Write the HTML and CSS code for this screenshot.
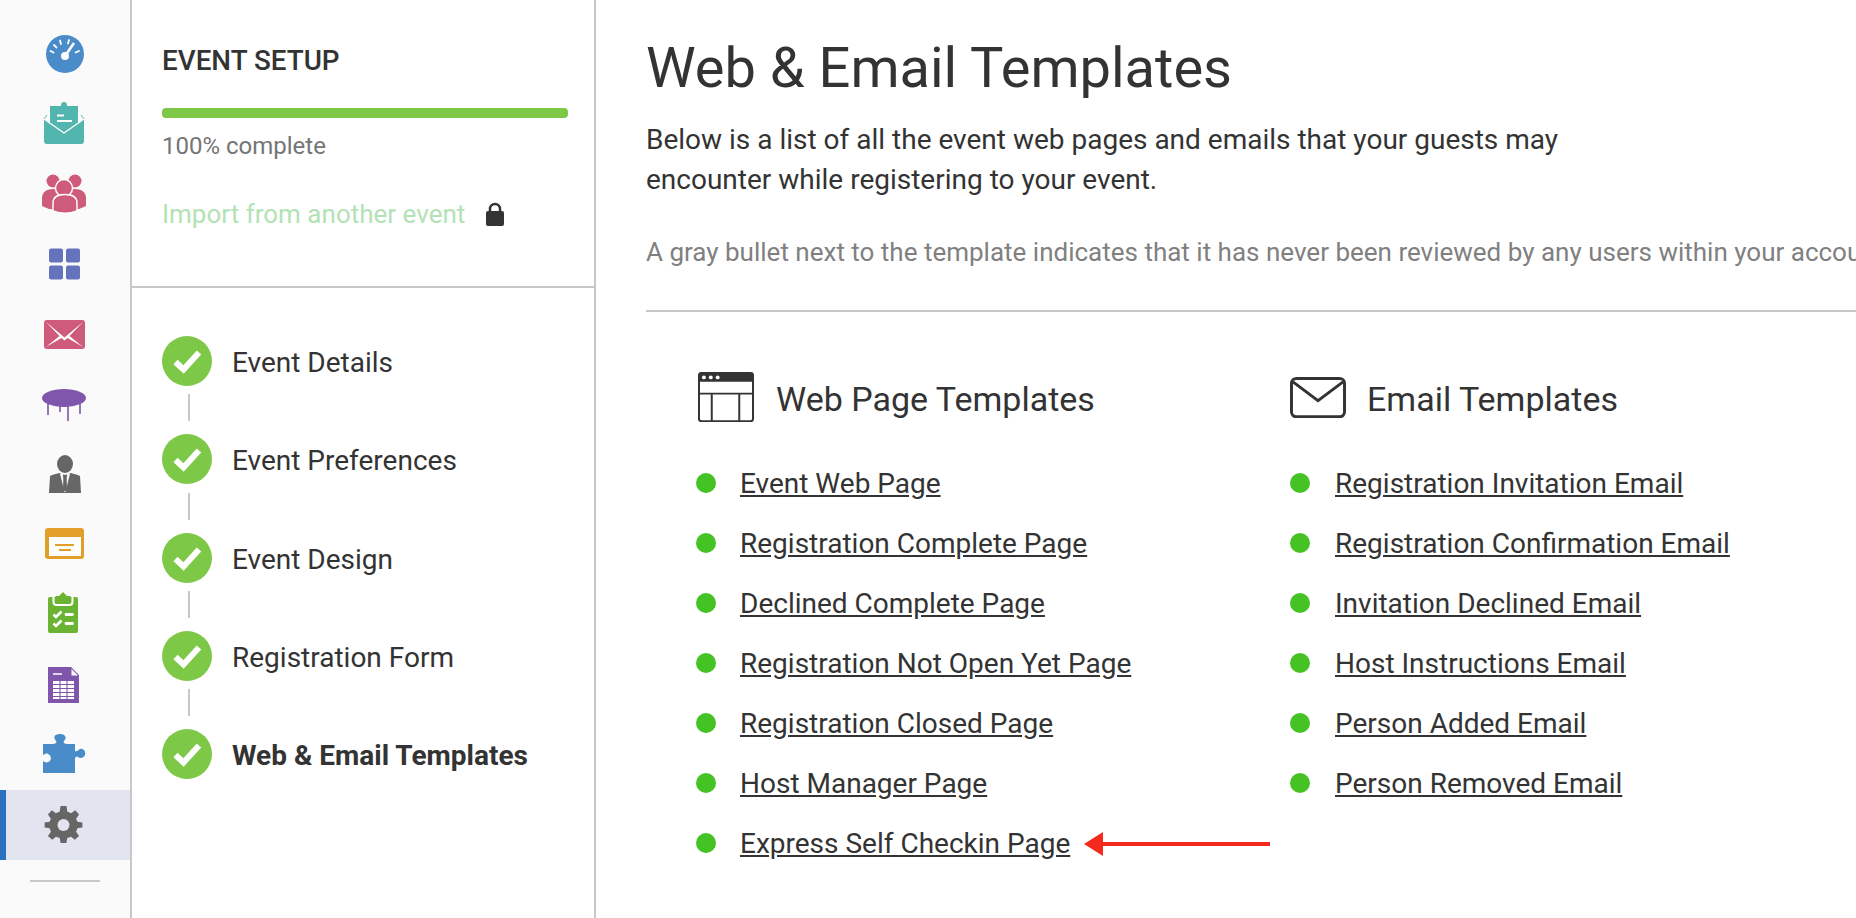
FILE: index.html
```html
<!DOCTYPE html>
<html lang="en">
<head>
    <meta charset="UTF-8">
    <title>Web &amp; Email Templates</title>
    <link rel="stylesheet" href="styles.css">
</head>
<body>
    <div class="app">
        <!-- Icon sidebar -->
        <nav class="sidebar">
            <div class="side-item">
                <svg viewBox="0 0 48 48" class="side-icon">
                    <circle cx="24" cy="24" r="19" fill="#4a8cca"/>
                    <circle cx="24" cy="26" r="4" fill="#fff"/>
                    <path d="M24 26 L33 13" stroke="#fff" stroke-width="2.6"/>
                    <path d="M9.5 21 L12.5 22.500 M13 15 L15.500 17.500 M19 10.500 L20 14 M28 10 L27 13.500 M38 21 L34.500 22.500" stroke="#fff" stroke-width="1.8" stroke-linecap="round"/>
                </svg>
            </div>
            <div class="side-item">
                <svg viewBox="0 0 48 48" class="side-icon">
                    <circle cx="23" cy="5" r="3" fill="#52b5ae"/>
                    <path d="M9 6 H37 V23 L23 33 L9 23 Z" fill="#52b5ae"/>
                    <path d="M6 15 L3 19 L5 21 M40 15 L43 19 L41 21" fill="none" stroke="#52b5ae" stroke-width="1"/>
                    <path d="M3 19 L23 33 L43 19 V41 A3 3 0 0 1 40 44 H6 A3 3 0 0 1 3 41 Z" fill="#52b5ae"/>
                    <path d="M3 19 L23 33 L43 19" fill="none" stroke="#fff" stroke-width="1.200"/>
                    <path d="M16 15.500 H23 M16 21 H31" stroke="#fff" stroke-width="1.800"/>
                </svg>
            </div>
            <div class="side-item">
                <svg viewBox="0 0 48 48" class="side-icon">
                    <g fill="#cf5b7c">
                        <circle cx="12" cy="11" r="6.500"/>
                        <circle cx="34" cy="11" r="6.500"/>
                        <path d="M1 36 V28 C1 22 6 19 12 19 C18 19 23 22 23 28 V40 L8 39 Z"/>
                        <path d="M45 36 V28 C45 22 40 19 34 19 C28 19 23 22 23 28 V40 L38 39 Z"/>
                    </g>
                    <circle cx="23" cy="18" r="8.500" fill="#cf5b7c" stroke="#fff" stroke-width="1.400"/>
                    <path d="M12 41 V33 C12 27 17 24.500 24 24.500 C31 24.500 36 27 36 33 V41 C28 44 20 44 12 41 Z" fill="#cf5b7c" stroke="#fff" stroke-width="1.400"/>
                </svg>
            </div>
            <div class="side-item">
                <svg viewBox="0 0 48 48" class="side-icon">
                    <g fill="#6573bd">
                        <rect x="8" y="8.500" width="14" height="14" rx="2"/>
                        <rect x="25" y="8.500" width="14" height="14" rx="2"/>
                        <rect x="8" y="25.500" width="14" height="14" rx="2"/>
                        <rect x="25" y="25.500" width="14" height="14" rx="2"/>
                    </g>
                </svg>
            </div>
            <div class="side-item">
                <svg viewBox="0 0 48 48" class="side-icon">
                    <rect x="3" y="10" width="41" height="29" rx="3" fill="#cf5b7c"/>
                    <path d="M5 12 L20 24.500 L23.500 27.500 L27 24.500 L42 12 L28.500 26 L42 37 L26.500 28 L23.500 30.500 L20.500 28 L5 37 L18.500 26 Z" fill="#fff"/>
                </svg>
            </div>
            <div class="side-item">
                <svg viewBox="0 0 48 48" class="side-icon">
                    <ellipse cx="23" cy="18" rx="22" ry="9" fill="#7f56ab"/>
                    <path d="M7 22 V35 M19 26 V32 M27 26 V41 M39 22 V34" stroke="#7f56ab" stroke-width="1.600"/>
                </svg>
            </div>
            <div class="side-item">
                <svg viewBox="0 0 48 48" class="side-icon">
                    <ellipse cx="24" cy="14" rx="8" ry="9" fill="#666"/>
                    <path d="M8 43 L9 26 C12 24.500 15 24 18 23 L24 25 L30 23 C33 24 36 24.500 39 26 L40 43 Z" fill="#666"/>
                    <path d="M19.500 24 L24 42 L21.500 24 Z M28.500 24 L24 42 L26.500 24 Z" fill="#fff" stroke="#fff" stroke-width="0.800"/>
                    <path d="M22.500 25 H25.500 L26 39 L24 42 L22 39 Z" fill="#666"/>
                </svg>
            </div>
            <div class="side-item">
                <svg viewBox="0 0 48 48" class="side-icon">
                    <rect x="4" y="8" width="39" height="31" rx="3" fill="#e29f27"/>
                    <rect x="8" y="17" width="32" height="19" fill="#fff"/>
                    <path d="M14 25 H33 M18 30 H30" stroke="#e29f27" stroke-width="1.800"/>
                </svg>
            </div>
            <div class="side-item">
                <svg viewBox="0 0 48 48" class="side-icon">
                    <rect x="7" y="7" width="30" height="36" rx="2" fill="#6bb332"/>
                    <path d="M12.500 7 V12 A3 3 0 0 0 15.500 15 H28.500 A3 3 0 0 0 31.500 12 V7" fill="#6bb332" stroke="#fff" stroke-width="2"/>
                    <path d="M14.500 6 H18 L22 2 L26 6 H29.500 V12 H14.500 Z" fill="#6bb332"/>
                    <path d="M12.500 24.500 L15 27 L20.500 21.500 M12.500 33.500 L15 36 L20.500 30.500" fill="none" stroke="#fff" stroke-width="2.600"/>
                    <path d="M25 24.500 H31.500 M25 33.500 H31.500" stroke="#fff" stroke-width="2.800" stroke-linecap="round"/>
                </svg>
            </div>
            <div class="side-item">
                <svg viewBox="0 0 48 48" class="side-icon">
                    <path d="M7 7 H30 L38 15 V43 H7 Z" fill="#7f56ab"/>
                    <path d="M30.500 9 L37 15.500 H30.500 Z" fill="#fff"/>
                    <path d="M12 14 H21" stroke="#fff" stroke-width="1.500"/>
                    <rect x="12" y="21" width="21" height="18" fill="#fff"/>
                    <path d="M12 24.500 H33 M12 28.500 H33 M12 32.500 H33 M12 36.500 H33 M19 21 V39 M26 21 V39" stroke="#7f56ab" stroke-width="1.100"/>
                </svg>
            </div>
            <div class="side-item">
                <svg viewBox="0 0 48 48" class="side-icon">
                    <path d="M2 43 V31 C4 33 8 33 9.500 30 C11 27 8 23 5 23.500 L2 25 V14 H12 C15 14 16 12.500 15 11 C11 6 15 4 19 4 C23 4 27 7 23 11 C22 12.500 23 14 26 14 H34 V21 C36 22 37 20 39 19 C43 18 45 22 44 25 C43 28 39 29 37 27 C35.500 26 34 27 34 29 V43 Z" fill="#4a8cca"/>
                </svg>
            </div>
            <div class="side-item active">
                <svg viewBox="0 0 48 48" class="side-icon">
                    <path transform="translate(23.500 24) scale(0.84) translate(-23.500 -24.500)" d="M20 2 H27 L28 8.500 L32.500 10.500 L37.500 7 L42 12 L38.500 17 L40 20.500 L46 21.500 V27.500 L40 28.500 L38.500 32.500 L42 37.500 L37 42 L32.500 38.500 L28 40 L27 46 H20 L19 40 L14.500 38.500 L10 42 L5 37.500 L8.500 32.500 L7 28.500 L1 27.500 V21.500 L7 20.500 L8.500 17 L5 12 L9.500 7 L14.500 10.500 L19 8.500 Z" fill="#666"/>
                    <circle cx="23.500" cy="24" r="6" fill="#e2e5ef"/>
                </svg>
            </div>
            <div class="side-rule"></div>
        </nav>

        <!-- Event setup panel -->
        <aside class="panel">
            <div class="setup">
                <h2>EVENT SETUP</h2>
                <div class="progress"></div>
                <div class="progress-label">100% complete</div>
                <div class="import">
                    <span>Import from another event</span>
                    <svg viewBox="0 0 18 24" class="lock">
                        <path d="M4 10 V7 A5 5 0 0 1 14 7 V10" fill="none" stroke="#333" stroke-width="2.500"/>
                        <rect x="0" y="9" width="18" height="15" rx="2" fill="#333"/>
                    </svg>
                </div>
            </div>
            <ul class="steps">
                <li class="step"><span class="check"><svg viewBox="0 0 50 50"><path d="M13.500 26 L21.500 33.500 L37 16.500" fill="none" stroke="#fff" stroke-width="6"/></svg></span>Event Details</li>
                <li class="step"><span class="check"><svg viewBox="0 0 50 50"><path d="M13.500 26 L21.500 33.500 L37 16.500" fill="none" stroke="#fff" stroke-width="6"/></svg></span>Event Preferences</li>
                <li class="step"><span class="check"><svg viewBox="0 0 50 50"><path d="M13.500 26 L21.500 33.500 L37 16.500" fill="none" stroke="#fff" stroke-width="6"/></svg></span>Event Design</li>
                <li class="step"><span class="check"><svg viewBox="0 0 50 50"><path d="M13.500 26 L21.500 33.500 L37 16.500" fill="none" stroke="#fff" stroke-width="6"/></svg></span>Registration Form</li>
                <li class="step current"><span class="check"><svg viewBox="0 0 50 50"><path d="M13.500 26 L21.500 33.500 L37 16.500" fill="none" stroke="#fff" stroke-width="6"/></svg></span>Web &amp; Email Templates</li>
            </ul>
        </aside>

        <!-- Main content -->
        <main class="main">
            <h1>Web &amp; Email Templates</h1>
            <p class="intro">Below is a list of all the event web pages and emails that your guests may encounter while registering to your event.</p>
            <p class="note">A gray bullet next to the template indicates that it has never been reviewed by any users within your account.</p>
            <hr class="divider">
            <div class="columns">
                <section class="col">
                    <h3>
                        <svg viewBox="0 0 57 51" class="col-icon">
                            <rect x="1" y="1" width="55" height="49" rx="2.500" fill="none" stroke="#333" stroke-width="2"/>
                            <path d="M3 1 H54 A2 2 0 0 1 56 3 V10 H1 V3 A2 2 0 0 1 3 1 Z" fill="#333"/>
                            <circle cx="6" cy="5.500" r="2" fill="#fff"/>
                            <circle cx="13" cy="5.500" r="2" fill="#fff"/>
                            <circle cx="20" cy="5.500" r="2" fill="#fff"/>
                            <path d="M1 22 H56 M14 22 V50 M42 22 V50" stroke="#333" stroke-width="2" fill="none"/>
                        </svg>
                        Web Page Templates
                    </h3>
                    <ul class="links">
                        <li><a href="#">Event Web Page</a></li>
                        <li><a href="#">Registration Complete Page</a></li>
                        <li><a href="#">Declined Complete Page</a></li>
                        <li><a href="#">Registration Not Open Yet Page</a></li>
                        <li><a href="#">Registration Closed Page</a></li>
                        <li><a href="#">Host Manager Page</a></li>
                        <li>
                            <a href="#">Express Self Checkin Page</a>
                            <svg viewBox="0 0 186 24" class="arrow">
                                <path d="M0 12 L19 0 V10 H186 V14 H19 V24 Z" fill="#f42a1f"/>
                            </svg>
                        </li>
                    </ul>
                </section>
                <section class="col col-email">
                    <h3>
                        <svg viewBox="0 0 57 42" class="col-icon">
                            <rect x="1.500" y="1.500" width="54" height="39" rx="5" fill="none" stroke="#333" stroke-width="3"/>
                            <path d="M3 5 L28.500 24 L54 5" fill="none" stroke="#333" stroke-width="3"/>
                        </svg>
                        Email Templates
                    </h3>
                    <ul class="links">
                        <li><a href="#">Registration Invitation Email</a></li>
                        <li><a href="#">Registration Confirmation Email</a></li>
                        <li><a href="#">Invitation Declined Email</a></li>
                        <li><a href="#">Host Instructions Email</a></li>
                        <li><a href="#">Person Added Email</a></li>
                        <li><a href="#">Person Removed Email</a></li>
                    </ul>
                </section>
            </div>
        </main>
    </div>
</body>
</html>
```

FILE: styles.css
```css
* {
    box-sizing: border-box;
}
html, body {
    height: 100%;
}
body {
    margin: 0;
    font-family: Roboto, "Liberation Sans", sans-serif;
    color: #333;
    background-color: #fff;
    overflow: hidden;
}
ul {
    list-style: none;
    margin: 0;
    padding: 0;
}
.app {
    display: flex;
    height: 918px;
}

/* Icon sidebar */
.sidebar {
    width: 132px;
    flex-shrink: 0;
    padding-top: 19px;
    background-color: #fafafa;
    border-right: 2px solid #c8c8c8;
}
.side-item {
    height: 70px;
    display: flex;
    align-items: center;
    padding-left: 41px;
}
.side-icon {
    width: 48px;
    height: 48px;
    display: block;
}
.side-item.active {
    margin-top: 1px;
    background-color: #e2e5ef;
    border-left: 6px solid #2a72c0;
    padding-left: 34px;
}
.side-rule {
    width: 70px;
    height: 2px;
    margin: 20px 0 0 30px;
    background-color: #c8c8c8;
}

/* Event setup panel */
.panel {
    width: 464px;
    flex-shrink: 0;
    border-right: 2px solid #c8c8c8;
}
.setup {
    height: 288px;
    padding: 46px 26px 0 30px;
    border-bottom: 2px solid #c8c8c8;
}
.setup h2 {
    margin: 0;
    font-size: 27.800px;
    line-height: 30px;
    font-weight: 500;
}
.progress {
    height: 10px;
    margin-top: 32px;
    border-radius: 4px;
    background-color: #7dc847;
}
.progress-label {
    margin-top: 14px;
    font-size: 24px;
    line-height: 28px;
    color: #757575;
}
.import {
    display: flex;
    align-items: center;
    margin-top: 34px;
    font-size: 26px;
    line-height: 40px;
    color: #b3e2b5;
}
.lock {
    width: 18px;
    height: 24px;
    margin-left: 21px;
}
.steps {
    padding: 48px 0 0 30px;
}
.step {
    position: relative;
    display: flex;
    align-items: center;
    height: 50px;
    padding-top: 3px;
    margin-bottom: 48.300px;
    font-size: 28px;
}
.step + .step::before {
    content: "";
    position: absolute;
    left: 26px;
    top: -40px;
    width: 2px;
    height: 27px;
    background-color: #c8c8c8;
}
.step.current {
    font-weight: 700;
}
.check {
    width: 50px;
    height: 50px;
    flex-shrink: 0;
    margin: -3px 20px 0 0;
    border-radius: 50%;
    background-color: #7dc847;
}
.check svg {
    display: block;
}

/* Main content */
.main {
    flex: 1;
    min-width: 0;
    padding: 32px 0 0 50px;
}
.main h1 {
    margin: 0;
    font-size: 56px;
    line-height: 72px;
    font-weight: 400;
}
.intro {
    max-width: 960px;
    margin: 16px 0 0;
    font-size: 28px;
    line-height: 40px;
}
.note {
    margin: 32px 0 0;
    font-size: 26px;
    line-height: 40px;
    color: #808080;
    white-space: nowrap;
}
.divider {
    height: 2px;
    margin: 38px 0 0;
    border: 0;
    background-color: #c8c8c8;
}
.columns {
    display: flex;
    padding: 61px 0 0 50px;
}
.col {
    width: 594px;
    flex-shrink: 0;
}
.col h3 {
    display: flex;
    align-items: center;
    height: 52px;
    margin: 0 0 28px 2px;
    font-size: 34px;
    font-weight: 400;
}
.col-email h3 {
    margin-left: 0;
}
.col-email .col-icon {
    margin-right: 21px;
}
.col-icon {
    width: 56px;
    margin: 0 22px 3px 0;
    flex-shrink: 0;
}
.links li {
    display: flex;
    align-items: center;
    height: 60px;
    font-size: 28px;
}
.links li::before {
    content: "";
    width: 20px;
    height: 20px;
    margin-right: 24px;
    border-radius: 50%;
    background-color: #46c324;
}
.col-email .links li::before {
    margin-right: 25px;
}
.links a {
    color: #333;
}
.arrow {
    width: 186px;
    height: 24px;
    margin: 2px 0 0 14px;
}
```
